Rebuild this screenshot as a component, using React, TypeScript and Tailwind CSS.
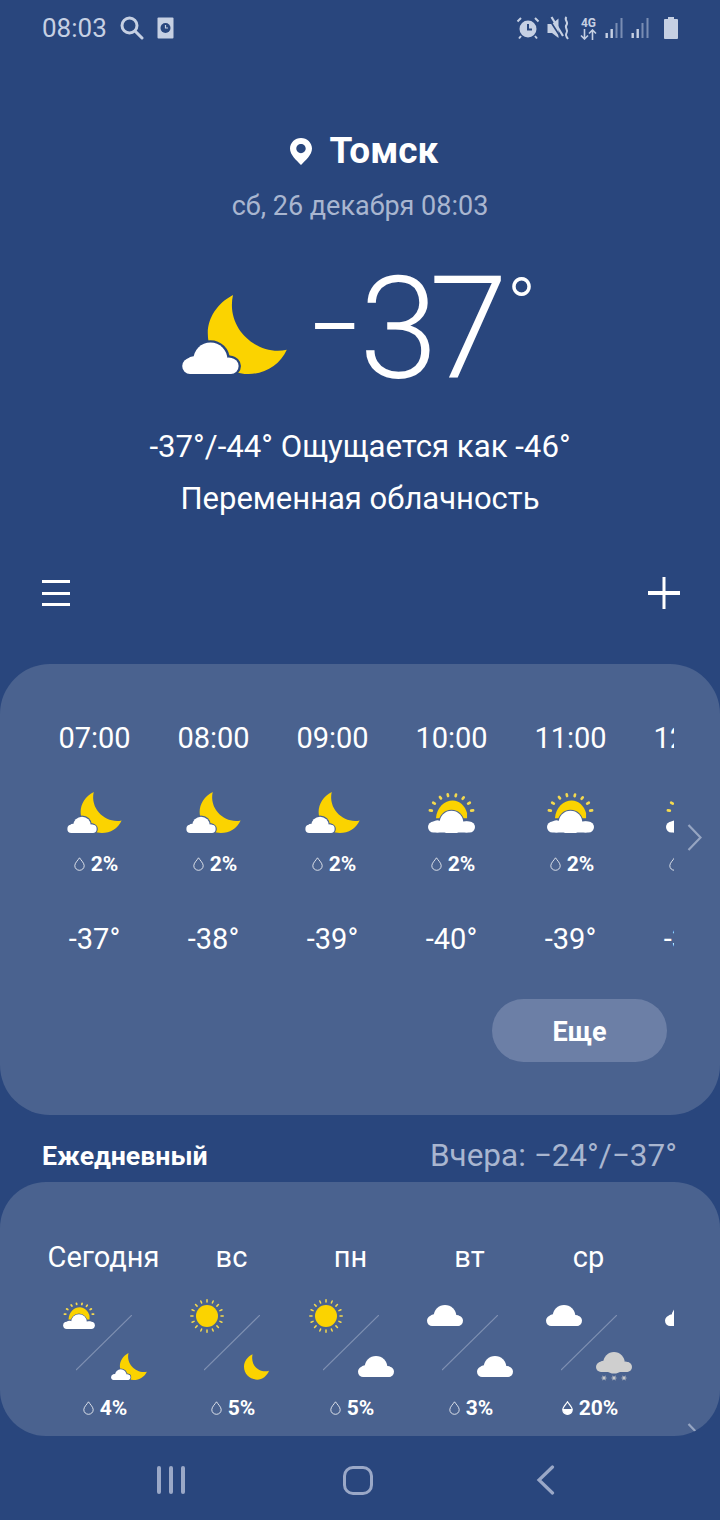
import React from "react";

const CARD = "#4a628f";
const YELLOW = "#fbd300";
const RAY = "#f4d94f";

// rough cloud: flat base, a big bump in the middle, two shoulders
function CloudShape({ x, w, top, bottom, fill, stroke, sw = 0 }: { x: number; w: number; top: number; bottom: number; fill: string; stroke?: string; sw?: number }) {
  const h = bottom - top;
  const r = h * 0.54;
  const bh = h * 0.5;
  const s = { fill, stroke, strokeWidth: sw };
  return (
    <g {...s}>
      <circle cx={x + w * 0.5} cy={top + r} r={r} />
      <circle cx={x + w * 0.2} cy={bottom - bh * 0.56} r={bh * 0.56} />
      <circle cx={x + w * 0.82} cy={bottom - bh * 0.52} r={bh * 0.52} />
      <rect x={x} y={bottom - bh} width={w} height={bh} rx={bh / 2} />
    </g>
  );
}

function MoonCloud({ w, h }: { w: number; h: number }) {
  return (
    <svg width={w} height={h} viewBox="0 0 315 238">
      <path d="M153 0C105 25 77 70 77 115C77 190 135 238 200 238C250 238 295 210 315 165C230 185 130 105 153 0Z" fill={YELLOW} />
      <CloudShape x={0} w={170} top={143} bottom={238} fill={CARD} stroke="var(--cut)" sw={14} />
      <CloudShape x={0} w={170} top={143} bottom={238} fill="#fff" />
    </svg>
  );
}

const rayAngles = [-172, -147, -122, -100, -78, -56, -33, -8];

function SunCloud({ w, h }: { w: number; h: number }) {
  return (
    <svg width={w} height={h} viewBox="0 0 142 121">
      {rayAngles.map((a) => {
        const c = Math.cos((a * Math.PI) / 180);
        const s = Math.sin((a * Math.PI) / 180);
        return <line key={a} x1={71 + 60 * c} y1={62 + 52 * s} x2={71 + 66 * c} y2={62 + 57 * s} stroke={RAY} strokeWidth={8} strokeLinecap="round" />;
      })}
      <path d="M24 78C26 45 50 24 75 24C95 24 112 40 118 62L118 78Z" fill={YELLOW} />
      <CloudShape x={0} w={142} top={55} bottom={121} fill={CARD} stroke={CARD} sw={6} />
      <CloudShape x={0} w={142} top={55} bottom={121} fill="#fff" />
    </svg>
  );
}

function Sun() {
  const rays = Array.from({ length: 16 }, (_, i) => (i * 22.5 * Math.PI) / 180);
  return (
    <svg width={34} height={34} viewBox="0 0 34 34">
      {rays.map((a, i) => (
        <line key={i} x1={17 + 14 * Math.cos(a)} y1={17 + 14 * Math.sin(a)} x2={17 + 16.2 * Math.cos(a)} y2={17 + 16.2 * Math.sin(a)} stroke={RAY} strokeWidth={1.5} strokeLinecap="round" />
      ))}
      <circle cx={17} cy={17} r={11} fill={YELLOW} />
    </svg>
  );
}

function Moon() {
  return (
    <svg width={25} height={26} viewBox="0 0 76 77">
      <path d="M26 0C10 8 0 22 0 38C0 60 18 77 40 77C56 77 70 66 76 50C52 58 18 38 26 0Z" fill={YELLOW} />
    </svg>
  );
}

function Cloud() {
  return (
    <svg width={36} height={21} viewBox="0 0 36 21">
      <CloudShape x={0} w={36} top={0} bottom={21} fill="#fff" />
    </svg>
  );
}

function SnowCloud() {
  return (
    <svg width={36} height={30} viewBox="0 0 36 30">
      <CloudShape x={0} w={36} top={0} bottom={20} fill="#cfcfcf" />
      {[8, 18, 28].map((x) => (
        <g key={x} stroke="#cfcfcf" strokeWidth={1}>
          <line x1={x - 2.4} y1={26} x2={x + 2.4} y2={26} />
          <line x1={x - 1.4} y1={23.8} x2={x + 1.4} y2={28.2} />
          <line x1={x + 1.4} y1={23.8} x2={x - 1.4} y2={28.2} />
        </g>
      ))}
    </svg>
  );
}

function Drop({ half }: { half?: boolean }) {
  return (
    <svg width={11} height={14} viewBox="0 0 11 14" fill="none">
      {half && <path d="M0.7 8H10.3C10.3 11 8.2 13.4 5.5 13.4C2.8 13.4 0.7 11 0.7 8Z" fill="#fff" />}
      <path d="M5.5 0.8C4 3.2 0.8 6 0.8 8.7C0.8 11.3 2.9 13.3 5.5 13.3C8.1 13.3 10.2 11.3 10.2 8.7C10.2 6 7 3.2 5.5 0.8Z" stroke="#fff" strokeWidth={half ? 1.2 : 0.8} />
    </svg>
  );
}

function Pct({ value, half }: { value: string; half?: boolean }) {
  return (
    <div className="flex h-6 items-center justify-center gap-[6px] pl-[3px]">
      <Drop half={half} />
      <span className="text-[21px] font-bold leading-6 text-white">{value}</span>
    </div>
  );
}

const hours = [
  { time: "07:00", icon: "moon", temp: "-37°" },
  { time: "08:00", icon: "moon", temp: "-38°" },
  { time: "09:00", icon: "moon", temp: "-39°" },
  { time: "10:00", icon: "sun", temp: "-40°" },
  { time: "11:00", icon: "sun", temp: "-39°" },
  { time: "12:00", icon: "sun", temp: "-39°" },
];

const days = [
  { name: "Сегодня", a: <SunCloud w={32} h={27} />, b: <MoonCloud w={36} h={27} />, pct: "4%" },
  { name: "вс", a: <Sun />, b: <Moon />, pct: "5%" },
  { name: "пн", a: <Sun />, b: <Cloud />, pct: "5%" },
  { name: "вт", a: <Cloud />, b: <Cloud />, pct: "3%" },
  { name: "ср", a: <Cloud />, b: <SnowCloud />, pct: "20%", half: true },
  { name: "чт", a: <Cloud />, b: <Cloud />, pct: "5%" },
];

function StatusBar() {
  const c = "#c6d0e3";
  return (
    <div className="flex h-[56px] items-center justify-between pl-[42px] pr-[42px] text-[#c6d0e3]">
      <div className="flex items-center">
        <span className="text-[26px] leading-8">08:03</span>
        {/* search */}
        <svg className="ml-[13px]" width={24} height={24} viewBox="0 0 24 24" fill="none" stroke={c} strokeWidth={3} strokeLinecap="round">
          <circle cx={9.5} cy={9.5} r={7.5} />
          <line x1={15} y1={15} x2={22} y2={22} />
        </svg>
        {/* screen recorder */}
        <svg className="ml-[13px]" width={17} height={22} viewBox="0 0 17 22">
          <rect x={0.5} y={0.5} width={16} height={21} rx={1} fill={c} />
          <circle cx={8.5} cy={11} r={5} fill="#29467d" />
          <path d="M8.5 8V11H11" stroke={c} strokeWidth={1.2} fill="none" />
        </svg>
      </div>
      <div className="flex items-center">
        {/* alarm */}
        <svg width={24} height={24} viewBox="0 0 24 24" fill="none" stroke={c}>
          <circle cx={12} cy={13} r={8.5} fill={c} stroke="none" />
          <path d="M12 8V13.5H16" stroke="#29467d" strokeWidth={2} />
          <path d="M1.5 5.5L5 2M22.5 5.5L19 2M5 20L3 22.5M19 20L21 22.5" strokeWidth={2} />
        </svg>
        {/* vibrate / muted */}
        <svg className="ml-[7px]" width={23} height={24} viewBox="0 0 23 24" fill="none">
          <path d="M0.5 8H5L11.5 2.5V22L5 17H0.5Z" fill={c} />
          <path d="M1 1.5L13.5 21" stroke="#29467d" strokeWidth={1.6} />
          <path d="M4.5 1L16 20" stroke={c} strokeWidth={2.2} />
          <path d="M19.5 1C16.5 4 22 6 19.5 9C17 12 22 14 19.5 17C18 19 19.5 21 21 23" stroke={c} strokeWidth={2} />
        </svg>
        {/* 4G */}
        <div className="ml-[10px] flex w-[17px] flex-col items-center">
          <span className="text-[12px] font-bold leading-[12px]">4G</span>
          <svg width={17} height={11} viewBox="0 0 17 11" fill="none" stroke={c} strokeWidth={1.6}>
            <path d="M4.5 0V10M1 6.5L4.5 10L8 6.5" />
            <path d="M12.5 11V1M9 4.5L12.5 1L16 4.5" />
          </svg>
        </div>
        {/* two sim signal bars */}
        {[0, 1].map((i) => (
          <svg key={i} className="ml-[8px]" width={18} height={22} viewBox="0 0 18 22">
            <rect x={0.5} y={16} width={2.4} height={5} fill={c} />
            <rect x={5.5} y={12} width={2.4} height={9} fill={c} />
            <rect x={10.5} y={6} width={2} height={15} fill="#7a8db3" />
            <rect x={15.5} y={1} width={2} height={20} fill="#7a8db3" />
          </svg>
        ))}
        {/* battery */}
        <svg className="ml-[15px]" width={14} height={22} viewBox="0 0 14 22">
          <path d="M4 0H10V2H13C13.5 2 14 2.5 14 3V21C14 21.5 13.5 22 13 22H1C0.5 22 0 21.5 0 21V3C0 2.5 0.5 2 1 2H4Z" fill={c} />
        </svg>
      </div>
    </div>
  );
}

export default function App() {
  return (
    <div
      className="relative flex h-[1520px] w-[720px] flex-col overflow-hidden bg-[#29467d] [font-family:Roboto,sans-serif] text-white"
      style={{ ["--cut" as string]: "#29467d" }}
    >
      <StatusBar />

      {/* Current weather */}
      <section className="flex flex-col items-center">
        <div className="mt-[72px] flex h-[46px] items-center justify-center pl-[8px]">
          <svg width={22} height={27} viewBox="0 0 22 27" className="mr-[18px]">
            <path fillRule="evenodd" d="M11 0C17 0 22 4.8 22 10.6C22 17 15.5 22.5 11 27C6.5 22.5 0 17 0 10.6C0 4.8 5 0 11 0ZM11 6C8.4 6 6.3 8 6.3 10.6C6.3 13.2 8.4 15.2 11 15.2C13.6 15.2 15.7 13.2 15.7 10.6C15.7 8 13.6 6 11 6Z" fill="#fff" />
          </svg>
          <h1 className="text-[37px] font-bold leading-[46px]">Томск</h1>
        </div>
        <p className="mt-[14px] h-[36px] text-[27px] leading-[36px] text-[#a9b6d0]">сб, 26 декабря 08:03</p>
        <div className="mt-[36px] flex h-[140px] items-center pr-[2px]">
          <div className="mt-[8px]">
            <MoonCloud w={105} h={79} />
          </div>
          <div className="ml-[22px] flex h-[140px] items-center font-light">
            <span className="mb-[6px] text-[80px] font-normal leading-none">–</span>
            <span className="ml-[-2px] text-[142px] leading-[140px] tracking-[-9px]">37</span>
            <span className="ml-[8px] mt-[8px] self-start text-[78px] leading-[78px]">°</span>
          </div>
        </div>
        <p className="mt-[27px] text-[31.2px] leading-[40px]">-37°/-44° Ощущается как -46°</p>
        <p className="mt-[12px] text-[31px] leading-[40px]">Переменная облачность</p>
      </section>

      {/* Toolbar */}
      <div className="mt-[58px] flex h-[32px] items-center justify-between pl-[42px] pr-[40px]">
        <div className="flex w-[28px] flex-col gap-[8.5px]">
          <div className="h-[3px] bg-white" />
          <div className="h-[3px] bg-white" />
          <div className="h-[3px] bg-white" />
        </div>
        <svg width={32} height={32} viewBox="0 0 32 32">
          <rect x={14.5} y={0} width={3} height={32} fill="#fff" />
          <rect x={0} y={14} width={32} height={4} fill="#fff" />
        </svg>
      </div>

      {/* Hourly */}
      <section className="relative mt-[55px] h-[451px] rounded-[50px] bg-[#4a628f] pl-[35px] pr-[46px] pt-[56px]" style={{ ["--cut" as string]: CARD }}>
        <div className="flex overflow-hidden">
          {hours.map((h) => (
            <div key={h.time} className="flex w-[119px] shrink-0 flex-col items-center">
              <div className="h-[36px] text-[29px] leading-[36px]">{h.time}</div>
              <div className="mt-[36px] h-[41px]">{h.icon === "moon" ? <MoonCloud w={55} h={41} /> : <SunCloud w={47} h={41} />}</div>
              <div className="mt-[19px]">
                <Pct value="2%" />
              </div>
              <div className="mt-[45px] h-[36px] text-[29px] leading-[36px]">{h.temp}</div>
            </div>
          ))}
        </div>
        <svg className="absolute left-[687px] top-[160px]" width={15} height={27} viewBox="0 0 15 27" fill="none" stroke="#96a5c2" strokeWidth={2.2}>
          <path d="M1.5 1L13.5 13.5L1.5 26" />
        </svg>
        <div className="mt-[42px] flex justify-end pr-[7px]">
          <button className="h-[63px] w-[175px] rounded-full bg-[#6c7fa6] pt-[3px] text-[27px] font-bold text-white">Еще</button>
        </div>
      </section>

      {/* Daily */}
      <div className="flex h-[67px] items-center justify-between pl-[42px] pr-[43px] pt-[15px]">
        <span className="text-[26.7px] font-bold">Ежедневный</span>
        <span className="text-[31.5px] text-[#a9b6d0]">Вчера: −24°/−37°</span>
      </div>
      <section className="relative h-[254px] overflow-hidden rounded-[46px] bg-[#4a628f] pl-[35px] pr-[46px] pt-[57px]" style={{ ["--cut" as string]: CARD }}>
        <div className="flex overflow-hidden">
          {days.map((d, i) => (
            <div key={d.name} className={`flex shrink-0 flex-col items-center ${i === 0 ? "w-[137px]" : "w-[119px]"}`}>
              <div className="h-[36px] text-[29px] leading-[36px]">{d.name}</div>
              <div className="relative mt-[15px] w-[100px]">
                <div className="flex h-[51px] items-center justify-start">
                  <div className="flex w-[50px] justify-center">{d.a}</div>
                </div>
                <div className="flex h-[51px] items-center justify-end">
                  <div className="flex w-[50px] justify-center">{d.b}</div>
                </div>
                <svg className="absolute left-[22px] top-[25px]" width={56} height={56} viewBox="0 0 56 56" stroke="#7f90b2" strokeWidth={1.2}>
                  <line x1={0} y1={55} x2={56} y2={0} />
                </svg>
              </div>
              <div className="mt-[4px]">
                <Pct value={d.pct} half={d.half} />
              </div>
            </div>
          ))}
        </div>
        <svg className="absolute left-[687px] top-[241px]" width={15} height={27} viewBox="0 0 15 27" fill="none" stroke="#96a5c2" strokeWidth={2.2}>
          <path d="M1.5 1L13.5 13.5L1.5 26" />
        </svg>
      </section>

      {/* Android nav bar */}
      <nav className="relative flex flex-1 items-center pt-[4px]">
        <div className="flex w-[343px] justify-center gap-[8.5px] pr-[1px]">
          <div className="h-[28px] w-[3.5px] rounded-full bg-[#9aa8c7]" />
          <div className="h-[28px] w-[3.5px] rounded-full bg-[#9aa8c7]" />
          <div className="h-[28px] w-[3.5px] rounded-full bg-[#9aa8c7]" />
        </div>
        <div className="h-[29px] w-[30px] rounded-[10px] border-[3.5px] border-[#9aa8c7]" />
        <svg className="ml-[163px]" width={19} height={30} viewBox="0 0 19 30" fill="none" stroke="#9aa8c7" strokeWidth={3.2} strokeLinecap="round">
          <path d="M16.5 2L3 15L16.5 28" />
        </svg>
      </nav>
    </div>
  );
}
